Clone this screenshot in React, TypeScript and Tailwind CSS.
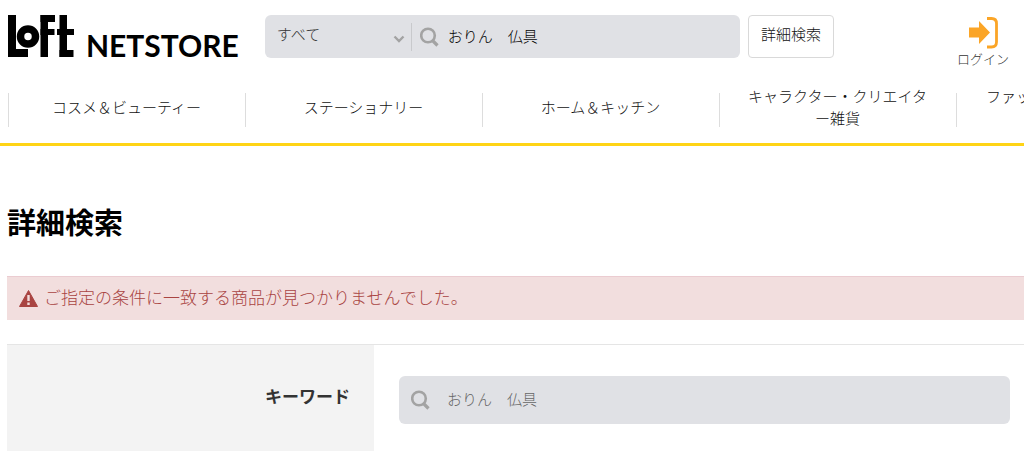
import { useState } from "react";

const categories = [
  'コスメ＆ビューティー',
  'ステーショナリー',
  'ホーム＆キッチン',
  'キャラクター・クリエイター雑貨',
];

const Logo = () => (
  <a href="#" className="flex items-end text-black" aria-label="Loft NETSTORE">
    <svg width="66" height="42" viewBox="0 0 66 42" className="mb-[3px]" aria-hidden="true">
      <rect x="0" y="0" width="8" height="42" />
      <rect x="0" y="34" width="20" height="8" />
      <circle cx="20" cy="21.5" r="12" fill="white" />
      <circle cx="20" cy="21.5" r="7.5" fill="white" stroke="black" strokeWidth="7.5" />
      <rect x="32.5" y="0" width="7.5" height="42" />
      <rect x="32.5" y="0" width="14.5" height="7" />
      <rect x="32.5" y="14" width="14" height="6" />
      <rect x="51.5" y="0" width="7.5" height="42" />
      <rect x="49" y="14" width="17" height="6" />
      <rect x="51.5" y="35" width="14" height="7" />
    </svg>
    <span className="ml-3 font-[Lato] text-[30px] leading-[30px] font-bold">NETSTORE</span>
  </a>
);

const SearchIcon = () => (
  <svg width="20" height="20" viewBox="0 0 20 20" fill="none" stroke="#a3a3a3" className="shrink-0" aria-hidden="true">
    <circle cx="8" cy="8.500" r="6.800" strokeWidth="2.6" />
    <path d="M12.500 13.500l5 5" strokeWidth="3.2" />
  </svg>
);

const App = () => {
  const [query, setQuery] = useState<string>('おりん　仏具');
  const [keyword, setKeyword] = useState<string>('おりん　仏具');

  return (
    <div className="overflow-hidden bg-white font-['Noto_Sans_CJK_JP',sans-serif] text-[15px] font-light text-[#111]">
      <header className="border-b-3 border-[#ffd416]">
        <div className="flex items-start pt-[15px] pr-[15px] pl-2">
          <Logo />
          <form className="ml-[26px] flex h-[43px] flex-1 items-center rounded-md bg-[#e0e1e5]" onSubmit={e => e.preventDefault()}>
            <div className="relative flex h-7 w-[147px] shrink-0 items-center border-r border-[#c8c9cc]">
              <select aria-label="カテゴリ" className="h-7 w-full appearance-none bg-transparent pb-1 pl-3 text-[#333]">
                <option>すべて</option>
              </select>
              <svg width="12" height="8" viewBox="0 0 12 8" fill="none" stroke="#a3a3a3" strokeWidth="2.4" className="pointer-events-none absolute right-1.5 bottom-2" aria-hidden="true">
                <path d="M1.500 1.500l4.500 4.500 4.500-4.500" />
              </svg>
            </div>
            <label className="flex flex-1 items-center gap-2 pl-2">
              <SearchIcon />
              <input
                type="text"
                aria-label="検索"
                className="h-8 w-full min-w-0 bg-transparent pb-0.5 text-black focus:outline-none"
                value={query}
                onChange={e => setQuery(e.target.value)}
              />
            </label>
          </form>
          <button type="button" className="ml-2 h-[43px] shrink-0 rounded border border-[#d9d9d9] bg-white px-3 pb-1">
            詳細検索
          </button>
          <a href="#" className="ml-[123px] flex shrink-0 flex-col items-center text-[13px] leading-5 text-[#333]">
            <svg width="30" height="34" viewBox="0 0 30 34" aria-hidden="true">
              <path d="M1 12.500h10V6l11 11.500L11 29v-6.500H1z" fill="#fba527" />
              <path d="M19 3.500h4.500Q28.500 3.500 28.500 8.500v18.500q0 5-5 5H19" fill="none" stroke="#fba527" strokeWidth="2.800" />
            </svg>
            ログイン
          </a>
        </div>
        <nav className="mt-3 ml-2 flex h-[62px] overflow-hidden leading-[22px]">
          {categories.map(name => (
            <a key={name} href="#" className="relative flex h-[52px] w-[237px] shrink-0 items-center justify-center px-7 text-center before:absolute before:top-3 before:left-0 before:h-[34px] before:w-px before:bg-[#ddd]">
              {name}
            </a>
          ))}
          <a href="#" className="relative flex h-[52px] w-[237px] shrink-0 items-center pb-[22px] pl-[30px] before:absolute before:top-3 before:left-0 before:h-[34px] before:w-px before:bg-[#ddd]">
            ファッション
          </a>
        </nav>
      </header>

      <main className="pt-[53px] pl-[7px]">
        <h1 className="text-[29px] leading-[44px] font-bold text-black">詳細検索</h1>
        <p role="alert" className="mt-[33px] flex h-11 items-center gap-1.5 border-t border-[#ebccd1] bg-[#f2dede] pl-3 text-[17px] text-[#a94442]">
          <svg width="19" height="17" viewBox="0 0 19 17" aria-hidden="true">
            <path d="M9.500 0.500L18.500 16.500H0.500z" fill="#a94442" stroke="#a94442" strokeLinejoin="round" />
            <path d="M9.500 5v6M9.500 12.500v2.500" stroke="#f2dede" strokeWidth="2.400" />
          </svg>
          <span className="pb-1">ご指定の条件に一致する商品が見つかりませんでした。</span>
        </p>
        <table className="mt-6 w-full border-t border-[#e5e5e5]">
          <tbody>
            <tr>
              <th scope="row" className="w-[367px] bg-[#f3f3f3] pr-6 pb-1 text-right text-[17px] font-bold text-[#333]">
                <label htmlFor="keyword">キーワード</label>
              </th>
              <td className="pt-[31px] pr-3.5 pb-[27px] pl-[25px]">
                <div className="flex h-12 items-center gap-4 rounded-md bg-[#e0e1e5] pl-3">
                  <SearchIcon />
                  <input
                    id="keyword"
                    type="text"
                    className="h-8 w-full min-w-0 bg-transparent pb-1 text-[#666] focus:outline-none"
                    value={keyword}
                    onChange={e => setKeyword(e.target.value)}
                  />
                </div>
              </td>
            </tr>
          </tbody>
        </table>
      </main>
    </div>
  );
};

export default App;
